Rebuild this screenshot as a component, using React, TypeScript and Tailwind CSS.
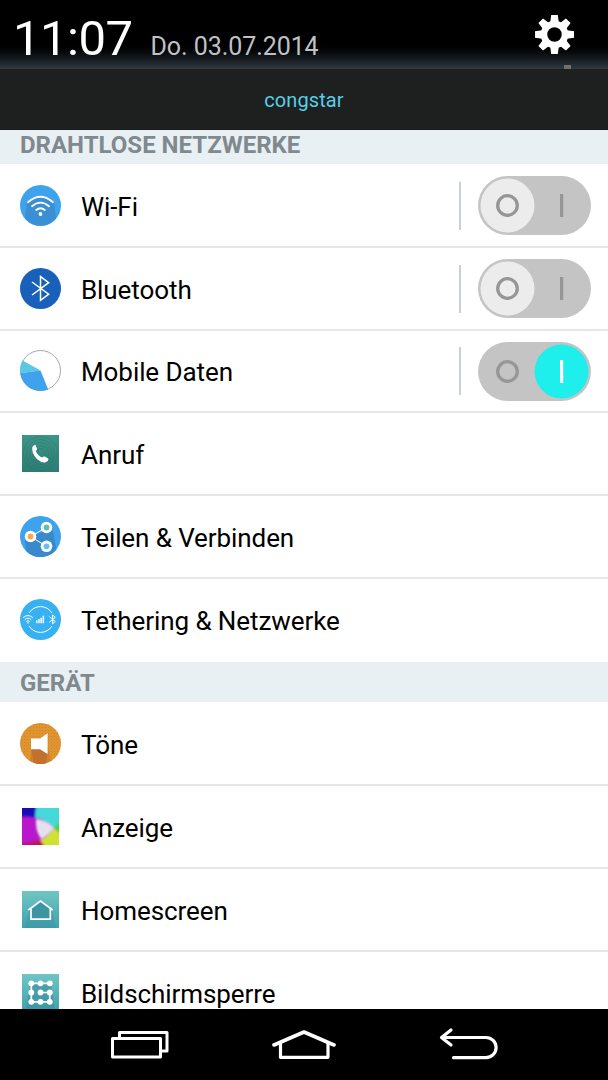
import type { ReactNode } from 'react';

function WifiIcon() {
  return (
    <svg width="41" height="41" viewBox="0 0 41 41" fill="none">
      <circle cx="20.5" cy="20.5" r="20.5" fill="#3ea2ec" />
      <path d="M7 17 L5 33.5 A20.5 20.5 0 0 0 36 33.5 L34 17 Q20.5 5 7 17Z" fill="#3b8fd3" />
      <g stroke="#fff" strokeWidth="1.8" strokeLinecap="round">
        <path d="M8 17.2 Q20.5 6.4 33 17.2" />
        <path d="M12 21.2 Q20.5 14 29 21.2" />
        <path d="M16.2 25 Q20.5 21.4 24.8 25" />
      </g>
      <circle cx="20.5" cy="29" r="1.9" fill="#fff" />
    </svg>
  );
}

function BluetoothIcon() {
  return (
    <svg width="41" height="41" viewBox="0 0 41 41" fill="none">
      <circle cx="20.5" cy="20.5" r="20.5" fill="#1860b9" />
      <path d="M12 14 L28.7 26.2 L20.5 32.3 V8.6 L28.7 14.7 L12 27" stroke="#fff" strokeWidth="1.5" />
    </svg>
  );
}

function DataIcon() {
  return (
    <svg width="41" height="41" viewBox="0 0 41 41" fill="none">
      <circle cx="20.5" cy="20.5" r="20" fill="#fff" stroke="#a3a8aa" />
      <path d="M20.5 20.5 L2.6 10.6 A20.5 20.5 0 0 0 .2 23.3Z" fill="#58c8e6" />
      <path d="M20.5 20.5 L.2 23.3 A20.5 20.5 0 0 0 28.2 39.5Z" fill="#3ea2ec" />
    </svg>
  );
}

function CallIcon() {
  return (
    <svg width="37" height="37" viewBox="0 0 37 37" fill="none">
      <defs>
        <linearGradient id="call" x1="0" y1="0" x2="0" y2="1">
          <stop offset="0" stopColor="#3d9587" />
          <stop offset="1" stopColor="#2d7c73" />
        </linearGradient>
      </defs>
      <rect width="37" height="37" fill="url(#call)" />
      <g stroke="#226c64" strokeWidth=".7" opacity=".4">
        <circle cx="18.5" cy="18.5" r="5" />
        <circle cx="18.5" cy="18.5" r="8" />
        <circle cx="18.5" cy="18.5" r="11" />
        <circle cx="18.5" cy="18.5" r="14" />
        <circle cx="18.5" cy="18.5" r="17" />
      </g>
      <path
        d="M10.3 12.2 Q11.4 9.6 13.4 9.7 Q14.2 11.5 15.1 14 Q15.2 15.2 13.7 16.1 Q15.8 20.7 20.1 22.6 Q21.4 21.1 22.7 21.5 Q25.2 22.8 26.6 24 Q26.3 26.5 23.6 27.3 Q20 28.3 15.2 24.2 Q9.3 18.6 10.3 12.2Z"
        fill="#fff"
      />
    </svg>
  );
}

function ShareIcon() {
  return (
    <svg width="41" height="41" viewBox="0 0 41 41" fill="none">
      <circle cx="20.5" cy="20.5" r="20.5" fill="#3ea2ec" />
      <path d="M5 23 L30 13 L33 15 L36.5 33.4 A20.5 20.5 0 0 1 6 35Z" fill="#3989cd" />
      <path d="M26.5 11.5 L10.5 20.5 L26.5 30.3" stroke="#fff" strokeWidth="1" />
      <circle cx="10.5" cy="20.5" r="5.8" fill="#fff" />
      <circle cx="26.5" cy="11.5" r="5.8" fill="#fff" />
      <circle cx="26.5" cy="30.3" r="5.8" fill="#fff" />
      <circle cx="10.5" cy="20.5" r="2.9" fill="#f8a941" />
      <circle cx="26.5" cy="11.5" r="2.9" fill="#5cc0ae" />
      <circle cx="26.5" cy="30.3" r="2.9" fill="#6bbcf0" />
    </svg>
  );
}

function TetheringIcon() {
  return (
    <svg width="41" height="41" viewBox="0 0 41 41" fill="none">
      <circle cx="20.5" cy="20.5" r="20.5" fill="#38b1f2" />
      <g stroke="#fff" strokeWidth="1" strokeLinecap="round">
        <path d="M9.3 13.5 A13.3 13.3 0 0 1 31.7 13.5" />
        <path d="M9.3 27.5 A13.3 13.3 0 0 0 31.7 27.5" />
        <path d="M3.4 18.4 Q8 14.4 12.6 18.4 M5 20.4 Q8 17.6 11 20.4 M6.5 22.2 Q8 20.8 9.5 22.2" />
        <path d="M29.6 17.8 L35.3 22.5 L32.6 24.8 V16 L35.3 18.3 L29.6 23" />
      </g>
      <circle cx="8" cy="23.7" r=".8" fill="#fff" />
      <path d="M16.2 24.3v-3h1.3v3z M18.3 24.3v-4.3h1.4v4.3z M20.4 24.3v-5.6h1.5v5.6z M22.6 24.3v-7.6h1.5v7.6z" fill="#fff" />
    </svg>
  );
}

function SoundIcon() {
  return (
    <svg width="41" height="41" viewBox="0 0 41 41" fill="none">
      <defs>
        <pattern id="dots" width="3" height="3" patternUnits="userSpaceOnUse">
          <circle cx="1.5" cy="1.5" r=".5" fill="#c9812a" />
        </pattern>
      </defs>
      <circle cx="20.5" cy="20.5" r="20.5" fill="#e0942f" />
      <circle cx="20.5" cy="20.5" r="20.5" fill="url(#dots)" />
      <path d="M11.5 26 L10 38 Q20.5 43 31 38 L28 26Z" fill="#d1812e" />
      <path d="M11.5 26 L13.5 39.7 Q20.5 42 26 40 L27.5 30 L20 25Z" fill="#c2702d" />
      <path d="M11 15.6 H20 L27.6 10.2 V31 L20 26.3 H11Z" fill="#fff" />
    </svg>
  );
}

function DisplayIcon() {
  return (
    <svg width="37" height="37" viewBox="0 0 37 37" fill="none">
      <defs>
        <filter id="soft" x="-20%" y="-20%" width="140%" height="140%">
          <feGaussianBlur stdDeviation="1.1" />
        </filter>
        <clipPath id="displayClip">
          <rect width="37" height="37" />
        </clipPath>
      </defs>
      <g clipPath="url(#displayClip)">
        <rect width="37" height="37" fill="#b817cc" />
        <g filter="url(#soft)">
          <path d="M-4 -4 H15 L14 10 Q7 7 -4 9Z" fill="#1710b8" />
          <path d="M15 -4 H41 V14 L32 20 Q24 11 13 10 Q13 3 15 -4Z" fill="#45d9d8" />
          <path d="M32 20 L41 10 V28Z" fill="#45d445" />
          <path d="M32 20 L41 28 V41 H23 L18 32 Q26 29 32 20Z" fill="#cfe231" />
          <path d="M-4 36 Q10 35 18 32 L25 41 H-4Z" fill="#bd1650" />
          <path d="M14 11 Q25 12 32 20 Q26 28 19 31 Q13 22 14 11Z" fill="#e6e0ee" />
        </g>
      </g>
    </svg>
  );
}

function HomescreenIcon() {
  return (
    <svg width="37" height="37" viewBox="0 0 37 37" fill="none">
      <defs>
        <linearGradient id="teal" x1="0" y1="0" x2="0" y2="1">
          <stop offset="0" stopColor="#6fc5c2" />
          <stop offset="1" stopColor="#42a1ad" />
        </linearGradient>
      </defs>
      <rect width="37" height="37" fill="url(#teal)" />
      <path d="M7 19 L3 37 H34 L30 19 L18.5 10Z" fill="#3a94a3" opacity=".45" />
      <path d="M9 19 V28 H28.5 V19 L18.5 10.5Z" fill="#3d94a2" />
      <path d="M6.3 19 L18.5 10 L30.7 19 M9 17.8 V28.2 H28.3 V17.8" stroke="#fff" strokeWidth="1.7" />
    </svg>
  );
}

const DOTS = [9.3, 18.5, 27.8];

function LockIcon() {
  return (
    <svg width="37" height="37" viewBox="0 0 37 37" fill="none">
      <rect width="37" height="37" fill="url(#teal)" />
      <path d="M8 10 L4 37 H33 L29 10Z" fill="#3a8f9e" opacity=".6" />
      <path d="M27.8 9.3 H9.3 V27.8 H27.8 V18.5 H18.5" stroke="#fff" strokeWidth="1.7" />
      {DOTS.map((y) => DOTS.map((x) => <circle key={`${x}-${y}`} cx={x} cy={y} r="2.9" fill="#fff" />))}
    </svg>
  );
}

function Toggle({ on }: { on: boolean }) {
  return (
    <div className="flex items-center pt-px">
      <div className="h-12 w-[2px] bg-[#c9cfd6]" />
      <svg className="ml-[17px]" width="113" height="59" viewBox="0 0 113 59" fill="none">
        <rect width="113" height="59" rx="29.5" fill="#c4c4c4" />
        <circle cx={on ? 83.5 : 29.5} cy="29.5" r="27" fill={on ? '#1eefec' : '#ececec'} />
        <circle cx="29.5" cy="29.5" r="9.8" stroke="#969696" strokeWidth="3.3" />
        <rect x="82" y="18" width="3.2" height="23" fill={on ? '#fff' : '#969696'} />
      </svg>
    </div>
  );
}

function Row({ icon, label, on }: { icon: ReactNode; label: string; on?: boolean }) {
  return (
    <div className="flex h-[82.75px] shrink-0 items-center border-b-2 border-[#e6e6e6] pr-[17px] pl-5 last:border-transparent">
      <div className="flex w-[41px] shrink-0 justify-center">{icon}</div>
      <span className="ml-5 flex-1 pt-[3px] text-[26px] leading-none tracking-[-0.08px] whitespace-nowrap text-black">{label}</span>
      {on !== undefined && <Toggle on={on} />}
    </div>
  );
}

export default function App() {
  return (
    <div className="flex h-[1080px] w-[608px] flex-col overflow-hidden bg-white font-['Roboto',sans-serif]">
      {/* Status header */}
      <header className="relative flex h-[69px] shrink-0 items-baseline bg-linear-to-b from-black from-58% to-[#303941] pl-[13px]">
        <span className="pt-[10px] text-[49px] leading-[58px] tracking-[-0.5px] text-white">11:07</span>
        <span className="ml-[18px] text-[25px] tracking-[-0.07px] text-[#bfc1c5]">Do. 03.07.2014</span>
        <svg className="absolute top-[15px] left-[535px]" width="39" height="39" viewBox="0 0 39 39">
          <g fill="#fff">
            <path d="M16.2 0h6.6l1.2 9h-9z M16.2 39h6.6l1.2-9h-9z" />
            <path d="M0 16.2v6.6l9 1.2v-9z M39 16.2v6.6l-9 1.2v-9z" />
            <path d="M16.2 0h6.6l1.2 9h-9z M16.2 39h6.6l1.2-9h-9z" transform="rotate(45 19.5 19.5)" />
            <path d="M0 16.2v6.6l9 1.2v-9z M39 16.2v6.6l-9 1.2v-9z" transform="rotate(45 19.5 19.5)" />
          </g>
          <circle cx="19.5" cy="19.5" r="10.5" fill="none" stroke="#fff" strokeWidth="6.5" />
        </svg>
        <div className="absolute bottom-0 left-[564px] h-1 w-[7px] bg-[#707070]" />
      </header>

      <div className="flex h-[60.5px] shrink-0 items-center justify-center border-b border-[#191c1e] bg-[#1e1f1f] pt-[3px] text-[20px] tracking-[0.1px] text-[#56cfe6]">
        congstar
      </div>

      {/* Settings list */}
      <main className="flex flex-1 flex-col overflow-hidden">
        <h2 className="mb-[1.5px] h-[34px] shrink-0 bg-[#e8f0f4] pl-5 text-[24px] leading-[31px] font-bold text-[#80898e]">
          DRAHTLOSE NETZWERKE
        </h2>
        <section className="shrink-0">
          <Row icon={<WifiIcon />} label="Wi-Fi" on={false} />
          <Row icon={<BluetoothIcon />} label="Bluetooth" on={false} />
          <Row icon={<DataIcon />} label="Mobile Daten" on />
          <Row icon={<CallIcon />} label="Anruf" />
          <Row icon={<ShareIcon />} label="Teilen & Verbinden" />
          <Row icon={<TetheringIcon />} label="Tethering & Netzwerke" />
        </section>
        <h2 className="mb-[1.5px] h-[40.5px] shrink-0 bg-[#e8f0f4] pl-5 text-[24px] leading-[43px] font-bold text-[#80898e]">
          GERÄT
        </h2>
        <section className="shrink-0">
          <Row icon={<SoundIcon />} label="Töne" />
          <Row icon={<DisplayIcon />} label="Anzeige" />
          <Row icon={<HomescreenIcon />} label="Homescreen" />
          <Row icon={<LockIcon />} label="Bildschirmsperre" />
        </section>
      </main>

      {/* Navigation keys */}
      <nav className="flex h-[71px] shrink-0 items-center justify-between bg-black px-[108px]">
        <svg width="64" height="71" viewBox="108 0 64 71" fill="none" stroke="#fff" strokeWidth="3" strokeLinejoin="round">
          <path d="M119.5 28 V23.5 H167 V42 H162" />
          <rect x="112.5" y="29.5" width="48" height="18.5" />
        </svg>
        <svg width="64" height="71" viewBox="272 0 64 71" fill="none" stroke="#fff" strokeWidth="3.2" strokeLinejoin="round" strokeLinecap="round">
          <path d="M274 36 L304 23 L334 36" strokeWidth="3.6" />
          <path d="M280.5 34 V48.3 H328 V34" />
        </svg>
        <svg width="64" height="71" viewBox="436 0 64 71" fill="none" stroke="#fff" strokeWidth="3.2" strokeLinecap="round" strokeLinejoin="round">
          <path d="M451 21 L441.5 28.5 L451 36 M441.5 28.5 H486 A10 10 0 0 1 486 48.7 H453.5" />
        </svg>
      </nav>
    </div>
  );
}
